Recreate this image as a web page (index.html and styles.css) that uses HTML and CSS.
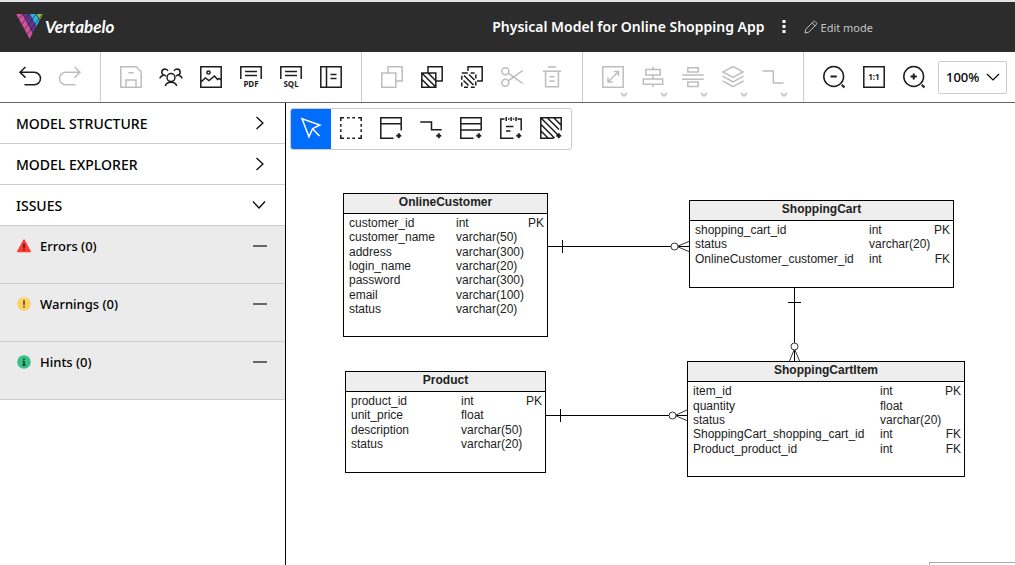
FILE: index.html
```html
<!DOCTYPE html>
<html lang="en">
<head>
<meta charset="utf-8">
<meta name="viewport" content="width=device-width, initial-scale=1">
<title>Vertabelo</title>
<link rel="stylesheet" href="styles.css">
</head>
<body>
<svg class="defs" aria-hidden="true">
  <defs>
    <clipPath id="logo-shape"><path d="M0 0H27L13.5 25Z"/></clipPath>
    <symbol id="plus" viewBox="0 0 6 6"><path d="M3 .5V5.5M.5 3H5.5"/></symbol>
  </defs>
</svg>
<header class="header">
  <a class="brand" href="#">
    <svg class="brand-mark" viewBox="0 0 27 25" aria-hidden="true">
      <g clip-path="url(#logo-shape)">
        <path fill="#d4509f" d="M0 0H6.7L20.2 25H13.5Z"/>
        <path fill="#5f3192" d="M6.7 0H13.5L27 25H20.2Z"/>
        <path fill="#29b4e8" d="M13.5 0H20.2L27 12.5V25Z"/>
        <path fill="#8cc04b" d="M20.2 0H27V12.5Z"/>
        <path stroke="#2c2c2c" stroke-width=".7" fill="none" d="M6.7 0L20.2 25M13.5 0L27 25M20.2 0L27 12.5M6.7 0L-4 14M13.5 0L0 18M20.2 0L4 21.5M26.5 0L8 24.5"/>
      </g>
    </svg>
    <span>Vertabelo</span>
  </a>
  <div class="document">
    <h1 class="title">Physical Model for Online Shopping App</h1>
    <button class="more" aria-label="More options"><svg viewBox="0 0 4 14"><path d="M.5 1h3v3h-3zM.5 6h3v3h-3zM.5 11h3v3h-3z"/></svg></button>
    <button class="mode"><svg viewBox="0 0 14 14"><path d="M1 13L1.8 9.3L9.6 1.5Q10.3.8 11 1.5L12.5 3Q13.2 3.7 12.5 4.4L4.7 12.2ZM8.2 3L11 5.8"/></svg>Edit mode</button>
  </div>
</header>

<nav class="toolbar" aria-label="Main toolbar">
  <div class="group">
    <button class="tool" aria-label="Undo"><svg viewBox="0 0 24 24"><path d="M7.5 2L2 7.3L7.5 12.6M2 7.3H16.3a6.2 6.2 0 0 1 0 12.4H6.5"/></svg></button>
    <button class="tool" disabled aria-label="Redo"><svg viewBox="0 0 24 24"><path d="M16.5 2L22 7.3L16.5 12.6M22 7.3H7.7a6.2 6.2 0 0 0 0 12.4H17.5"/></svg></button>
  </div>
  <div class="group">
    <button class="tool" disabled aria-label="Save"><svg viewBox="0 0 24 24"><path d="M1.8 1.8H17L22.2 6.8V22.2H1.8ZM9.5 7.8H14.5M7 22V15H17V22"/></svg></button>
    <button class="tool" aria-label="Share"><svg viewBox="0 0 24 24"><circle cx="12" cy="12.6" r="4"/><path d="M6.3 21Q7.5 17.3 12 17.3T17.7 21M1 13.5Q1.3 10.9 4.2 10.5M6 10.3Q3 10.3 2.8 7.2Q2.9 4.1 6 4Q8.2 4 8.9 6M5.6 10.2L7 11M23 13.5Q22.7 10.9 19.8 10.5M18 10.3Q21 10.3 21.2 7.2Q21.1 4.1 18 4Q15.8 4 15.1 6M18.4 10.2L17 11"/></svg></button>
    <button class="tool" aria-label="Export image"><svg viewBox="0 0 24 24"><path d="M1.8 1.8H22.2V22.2H1.8ZM2 17L6.3 13L10 15.5L15.5 11L18.5 14.5L20 13.4L22 15"/><circle cx="9.5" cy="7.5" r="1.6"/></svg></button>
    <button class="tool" aria-label="Export PDF"><svg viewBox="0 0 24 24"><path d="M1.8 14V1.8H22.2V14M6 6.5H18M6 10.5H18"/><text x="12" y="22">PDF</text></svg></button>
    <button class="tool" aria-label="Generate SQL"><svg viewBox="0 0 24 24"><path d="M1.8 14V1.8H22.2V14M6 6.5H18M6 10.5H18"/><text x="12" y="22">SQL</text></svg></button>
    <button class="tool" aria-label="Documentation"><svg viewBox="0 0 24 24"><path d="M1.8 1.8H22.2V22.2H1.8ZM7.5 2V22M11.5 9.5H17.5M11.5 13.5H17.5"/></svg></button>
  </div>
  <div class="group">
    <button class="tool" disabled aria-label="Copy"><svg viewBox="0 0 24 24"><path d="M1.8 8H15.8V22.2H1.8ZM8 8V1.8H22.2V16H16"/></svg></button>
    <button class="tool" aria-label="Paste"><svg viewBox="0 0 24 24"><path d="M1.8 8H15.8V22.2H1.8ZM8 8V1.8H22.2V16H16M2 8.2L15.8 22M8 8L15.8 15.8M2 14.5L9.5 22"/></svg></button>
    <button class="tool" aria-label="Paste as shortcut"><svg viewBox="0 0 24 24"><path d="M8 6V1.8H22.2V16H17M4 10.5L13.5 20M9 9.5L14.5 15M3.5 15.5L8.5 20.5"/><path stroke-dasharray="4 2.8" d="M3.8 8H15.8V22.2H1.8V8Z"/></svg></button>
    <button class="tool" disabled aria-label="Cut"><svg viewBox="0 0 24 24"><circle cx="5.3" cy="6.3" r="3.5"/><circle cx="5.3" cy="17.7" r="3.5"/><path d="M8.3 8.2L22.8 18.5M8.3 15.8L22.8 5.5"/></svg></button>
    <button class="tool" disabled aria-label="Delete"><svg viewBox="0 0 24 24"><path d="M7.8 2H16.2M3 6.3H21M5.6 6.3V21.7H18.4V6.3M9.5 11.7H14.5M9.5 16H14.5"/></svg></button>
  </div>
  <div class="group">
    <button class="tool" disabled aria-label="Resize"><svg viewBox="0 0 24 24"><path d="M1.8 1.8H22.2V22.2H1.8ZM7 17L17.5 6.5M12.8 6.5H17.5V11.2M7 12.3V17H11.7"/></svg><svg class="caret" viewBox="0 0 8 5"><path d="M1 1L4 4L7 1"/></svg></button>
    <button class="tool" disabled aria-label="Align"><svg viewBox="0 0 24 24"><path d="M4.8 4.5H19.2V10H4.8ZM2.3 14H21.7V19.2H2.3ZM12 1.5V4.5M12 10V14M12 19V22"/></svg><svg class="caret" viewBox="0 0 8 5"><path d="M1 1L4 4L7 1"/></svg></button>
    <button class="tool" disabled aria-label="Distribute"><svg viewBox="0 0 24 24"><path d="M6.8 2.7H17.2V7H6.8ZM1.2 10H22.8M1.2 14.3H22.8M6.8 17H17.2V21.5H6.8Z"/></svg><svg class="caret" viewBox="0 0 8 5"><path d="M1 1L4 4L7 1"/></svg></button>
    <button class="tool" disabled aria-label="Order"><svg viewBox="0 0 24 24"><path d="M12 1.5L22 6.9L12 12.3L2 6.9ZM1.5 11.2L12 17L22.5 11.2M1.5 15.8L12 21.7L22.5 15.8"/></svg><svg class="caret" viewBox="0 0 8 5"><path d="M1 1L4 4L7 1"/></svg></button>
    <button class="tool" disabled aria-label="Line style"><svg viewBox="0 0 24 24"><path d="M1.5 6H12.3V18H22.5"/></svg><svg class="caret" viewBox="0 0 8 5"><path d="M1 1L4 4L7 1"/></svg></button>
  </div>
  <div class="group">
    <button class="tool" aria-label="Zoom out"><svg viewBox="0 0 24 24"><circle cx="11.7" cy="11.5" r="9.9"/><path class="bold" d="M8.5 11.5H14.8M19.8 19.8L22.5 22.5"/></svg></button>
    <button class="tool" aria-label="Actual size"><svg viewBox="0 0 24 24"><path d="M1.8 1.8H22.2V22.2H1.8Z"/><text x="12" y="15">1:1</text></svg></button>
    <button class="tool" aria-label="Zoom in"><svg viewBox="0 0 24 24"><circle cx="11.7" cy="11.5" r="9.9"/><path class="bold" d="M8.5 11.5H14.8M11.7 8.4V14.6M19.8 19.8L22.5 22.5"/></svg></button>
    <div class="zoom">
      <select aria-label="Zoom level"><option>100%</option><option>150%</option></select>
      <svg viewBox="0 0 14 8"><path d="M1 1L7 7L13 1"/></svg>
    </div>
  </div>
</nav>

<main class="workspace">
  <aside class="sidebar">
    <button class="section">MODEL STRUCTURE<svg viewBox="0 0 14 14"><path d="M4.5 1L11 7L4.5 13"/></svg></button>
    <button class="section">MODEL EXPLORER<svg viewBox="0 0 14 14"><path d="M4.5 1L11 7L4.5 13"/></svg></button>
    <button class="section">ISSUES<svg viewBox="0 0 14 14"><path d="M1 3.5L7 10L13 3.5"/></svg></button>
    <div class="issue"><svg class="badge" viewBox="0 0 14 14"><path fill="#fc3d32" stroke="#fc3d32" stroke-linejoin="round" d="M7 1L13.3 12.5H.7Z"/><path stroke="#5d1512" stroke-width="1.8" d="M7 4.8V8.8M7 9.8V11.3"/></svg><span>Errors (0)</span><i class="dash"></i></div>
    <div class="issue"><svg class="badge" viewBox="0 0 14 14"><circle cx="7" cy="7" r="6.8" fill="#fdd264"/><path stroke="#6b5419" stroke-width="1.8" d="M7 3.3V8M7 9V10.6"/></svg><span>Warnings (0)</span><i class="dash"></i></div>
    <div class="issue"><svg class="badge" viewBox="0 0 14 14"><circle cx="7" cy="7" r="6.8" fill="#37c08a"/><path stroke="#124b35" stroke-width="1.8" d="M7 3.4V5M7 6V10.5M5.8 6.5H7M5.5 10H8.5"/></svg><span>Hints (0)</span><i class="dash"></i></div>
  </aside>

  <section class="canvas" aria-label="Diagram">
    <div class="palette">
      <button class="tool active" aria-label="Select"><svg viewBox="0 0 24 24"><path d="M3 2.8L21 9L13.5 12.7L10 20.7ZM13.5 12.7L20.5 20"/></svg></button>
      <button class="tool" aria-label="Marquee"><svg viewBox="0 0 24 24"><path d="M1.8 5V1.8H5M8 1.8H10.7M13.3 1.8H16M19 1.8H22.2V5M22.2 8V10.7M22.2 13.3V16M22.2 19V22.2H19M16 22.2H13.3M10.7 22.2H8M5 22.2H1.8V19M1.8 16V13.3M1.8 10.7V8"/></svg></button>
      <button class="tool" aria-label="Add table"><svg viewBox="0 0 24 24"><path d="M14.5 22.2H1.8V1.8H22.2V14.5M2 7.8H22"/><use class="bold" href="#plus" x="16.8" y="16.8" width="6" height="6"/></svg></button>
      <button class="tool" aria-label="Add reference"><svg viewBox="0 0 24 24"><path d="M1.3 6H12.5V13.8H22.7"/><use class="bold" href="#plus" x="16.8" y="16.8" width="6" height="6"/></svg></button>
      <button class="tool" aria-label="Add view"><svg viewBox="0 0 24 24"><path d="M14.5 22.2H1.8V1.8H22.2V14.5M2 7.8H22M2 14H22"/><use class="bold" href="#plus" x="16.8" y="16.8" width="6" height="6"/></svg></button>
      <button class="tool" aria-label="Add note"><svg viewBox="0 0 24 24"><path d="M5.5 3H1.8V22.2H14.5M18.5 3H22.2V14.5M9 3H10.5M13.8 3H15.3M7.2 1V5M12.1 1V5M17 1V5M7 10.5H14.5M7 15H11.5"/><use class="bold" href="#plus" x="16.8" y="16.8" width="6" height="6"/></svg></button>
      <button class="tool" aria-label="Add area"><svg viewBox="0 0 24 24"><path d="M14.5 22.2H1.8V1.8H22.2V14.5M2 2L19 19M8.5 2L20 13.5M15 2L22 9M2 8.5L15.5 22M2 15L9 22"/><use class="bold" href="#plus" x="16.8" y="16.8" width="6" height="6"/></svg></button>
    </div>

    <svg class="links" aria-hidden="true">
      <g transform="translate(-286 -103)">
        <path d="M547 246.5H690M562.5 240V253M545 415.5H688M560.5 409V422M794.5 287V362M788 302.5H801"/>
        <path class="foot" d="M677 246.5L690 241M677 246.5L690 252M675 415.5L688 409.5M675 415.5L688 421M794.5 349L789 362M794.5 349L800 362"/>
        <circle cx="674.5" cy="246.5" r="3.5"/><circle cx="672.5" cy="415.5" r="3.5"/><circle cx="794.5" cy="346.5" r="3.5"/>
      </g>
    </svg>

    <article class="entity customer">
      <h2>OnlineCustomer</h2>
      <table>
        <tr><td>customer_id</td><td>int</td><td>PK</td></tr>
        <tr><td>customer_name</td><td>varchar(50)</td><td></td></tr>
        <tr><td>address</td><td>varchar(300)</td><td></td></tr>
        <tr><td>login_name</td><td>varchar(20)</td><td></td></tr>
        <tr><td>password</td><td>varchar(300)</td><td></td></tr>
        <tr><td>email</td><td>varchar(100)</td><td></td></tr>
        <tr><td>status</td><td>varchar(20)</td><td></td></tr>
      </table>
    </article>
    <article class="entity cart">
      <h2>ShoppingCart</h2>
      <table>
        <tr><td>shopping_cart_id</td><td>int</td><td>PK</td></tr>
        <tr><td>status</td><td>varchar(20)</td><td></td></tr>
        <tr><td>OnlineCustomer_customer_id</td><td>int</td><td>FK</td></tr>
      </table>
    </article>
    <article class="entity item">
      <h2>ShoppingCartItem</h2>
      <table>
        <tr><td>item_id</td><td>int</td><td>PK</td></tr>
        <tr><td>quantity</td><td>float</td><td></td></tr>
        <tr><td>status</td><td>varchar(20)</td><td></td></tr>
        <tr><td>ShoppingCart_shopping_cart_id</td><td>int</td><td>FK</td></tr>
        <tr><td>Product_product_id</td><td>int</td><td>FK</td></tr>
      </table>
    </article>
    <article class="entity product">
      <h2>Product</h2>
      <table>
        <tr><td>product_id</td><td>int</td><td>PK</td></tr>
        <tr><td>unit_price</td><td>float</td><td></td></tr>
        <tr><td>description</td><td>varchar(50)</td><td></td></tr>
        <tr><td>status</td><td>varchar(20)</td><td></td></tr>
      </table>
    </article>
    <div class="overview"></div>
  </section>
</main>
</body>
</html>
```
FILE: styles.css
```css
* { box-sizing: border-box; }
body {
  margin: 0;
  min-height: 100vh;
  display: flex;
  flex-direction: column;
  background: #fff;
  color: #000;
  font-family: "Noto Sans", "Open Sans", sans-serif;
  font-size: 13px;
}
button {
  font: inherit;
  color: inherit;
  background: none;
  border: 0;
  padding: 0;
}
svg {
  fill: none;
  stroke: currentColor;
  stroke-width: 1.5;
  flex: none;
}
.bold { stroke-width: 2; }
.defs { position: absolute; width: 0; height: 0; }

.header {
  display: flex;
  align-items: center;
  justify-content: space-between;
  height: 52px;
  padding: 0 142px 2px 16px;
  background: #2c2c2c;
  border-top: 2px solid #dfe3e6;
  color: #fff;
}
.brand {
  display: flex;
  align-items: center;
  gap: 2px;
  color: #fff;
  text-decoration: none;
  font: italic bold 17px Lato, sans-serif;
}
.brand-mark { width: 27px; height: 25px; stroke: none; }
.document { display: flex; align-items: center; }
.title { margin: 0; font-size: 14px; font-weight: 600; }
.more { display: flex; padding: 0 18px 0 17px; }
.more svg { width: 4px; height: 14px; fill: #fff; stroke: none; }
.mode {
  display: flex;
  align-items: center;
  gap: 3px;
  padding-top: 2px;
  color: #c4c4c4;
  font-size: 11px;
}
.mode svg { width: 14px; height: 14px; stroke-width: 1; }

.toolbar {
  display: flex;
  height: 51px;
  border-bottom: 1px solid #666;
}
.group {
  display: flex;
  align-items: center;
  padding: 0 10px;
  border-right: 1px solid #ccc;
}
.group:last-child { border: 0; padding-right: 0; }
.tool {
  position: relative;
  display: flex;
  align-items: center;
  justify-content: center;
  width: 40px;
  height: 50px;
  color: #1c1c1c;
}
.tool:disabled { color: #bdbdbd; }
.tool svg { width: 24px; height: 24px; }
.tool text {
  fill: currentColor;
  stroke: none;
  font-size: 8px;
  font-weight: 700;
  text-anchor: middle;
}
.tool .caret {
  position: absolute;
  right: 5px;
  bottom: 5px;
  width: 8px;
  height: 5px;
}
.zoom {
  display: flex;
  align-items: center;
  position: relative;
  margin-left: 4px;
}
.zoom select {
  appearance: none;
  width: 69px;
  height: 33px;
  padding: 0 7px;
  border: 1px solid #ccc;
  border-radius: 2px;
  background: #fff;
  color: #000;
  font: 500 13px "Noto Sans", sans-serif;
}
.zoom svg {
  position: absolute;
  right: 7px;
  width: 14px;
  height: 8px;
  stroke-width: 1.2;
  pointer-events: none;
}

.workspace { display: flex; flex: 1; }
.sidebar {
  display: flex;
  flex-direction: column;
  width: 286px;
  border-right: 1px solid #000;
}
.section {
  display: flex;
  align-items: center;
  justify-content: space-between;
  height: 41px;
  padding: 0 19px 0 16px;
  border-bottom: 1px solid #ccc;
  font-size: 14px;
  font-weight: 500;
}
.section svg { width: 14px; height: 14px; stroke-width: 1.2; }
.issue {
  display: flex;
  align-items: flex-start;
  height: 58px;
  padding: 10px 18px 0 17px;
  background: #ebebeb;
  border-bottom: 1px solid #ccc;
  font-weight: 500;
  line-height: 20px;
}
.badge { width: 14px; height: 14px; margin: 3px 9px 0 0; stroke: none; }
.dash { width: 14px; height: 2px; margin: 9px 0 0 auto; background: #666; }

.canvas { position: relative; flex: 1; overflow: hidden; }
.palette {
  display: inline-flex;
  margin: 5px 4px;
  border: 1px solid #ccc;
  border-radius: 3px;
}
.palette .tool { height: 40px; padding-bottom: 2px; }
.palette .active { background: #006dff; color: #fff; border-radius: 2px 0 0 2px; }

.links {
  position: absolute;
  inset: 0;
  width: 100%;
  height: 100%;
  stroke: #000;
  stroke-width: 1;
  pointer-events: none;
}
.links circle { fill: #fff; stroke: #333; }
.foot { stroke: #333; }

.entity {
  position: absolute;
  border: 1px solid #000;
  background: #fff;
  color: #222;
  font: 12px/14px "Liberation Sans", Arial, sans-serif;
}
.entity h2 {
  height: 20px;
  margin: 0;
  border-bottom: 1px solid #000;
  background: #eee;
  font-size: 12px;
  line-height: 17px;
  text-align: center;
}
.entity table {
  width: 100%;
  margin-top: 2px;
  padding: 0 3px 0 5px;
  border-spacing: 0;
  table-layout: fixed;
}
.entity td { padding: 0; white-space: nowrap; }
.entity td:last-child { width: 22px; text-align: right; }
.customer { left: 57px; top: 90px; width: 205px; height: 144px; }
.customer table { height: 100px; }
.customer td:first-child { width: 107px; }
.cart { left: 403px; top: 97px; width: 265px; height: 88px; }
.cart table { height: 43px; }
.cart td:first-child { width: 174px; }
.item { left: 401px; top: 258px; width: 278px; height: 116px; }
.item table { height: 72px; }
.item td:first-child { width: 187px; }
.product { left: 59px; top: 268px; width: 201px; height: 102px; }
.product table { height: 57px; }
.product td:first-child { width: 110px; }
.overview {
  position: absolute;
  right: 0;
  bottom: 0;
  width: 86px;
  height: 3px;
  border: solid #aaa;
  border-width: 1px 0 0 1px;
}
```
